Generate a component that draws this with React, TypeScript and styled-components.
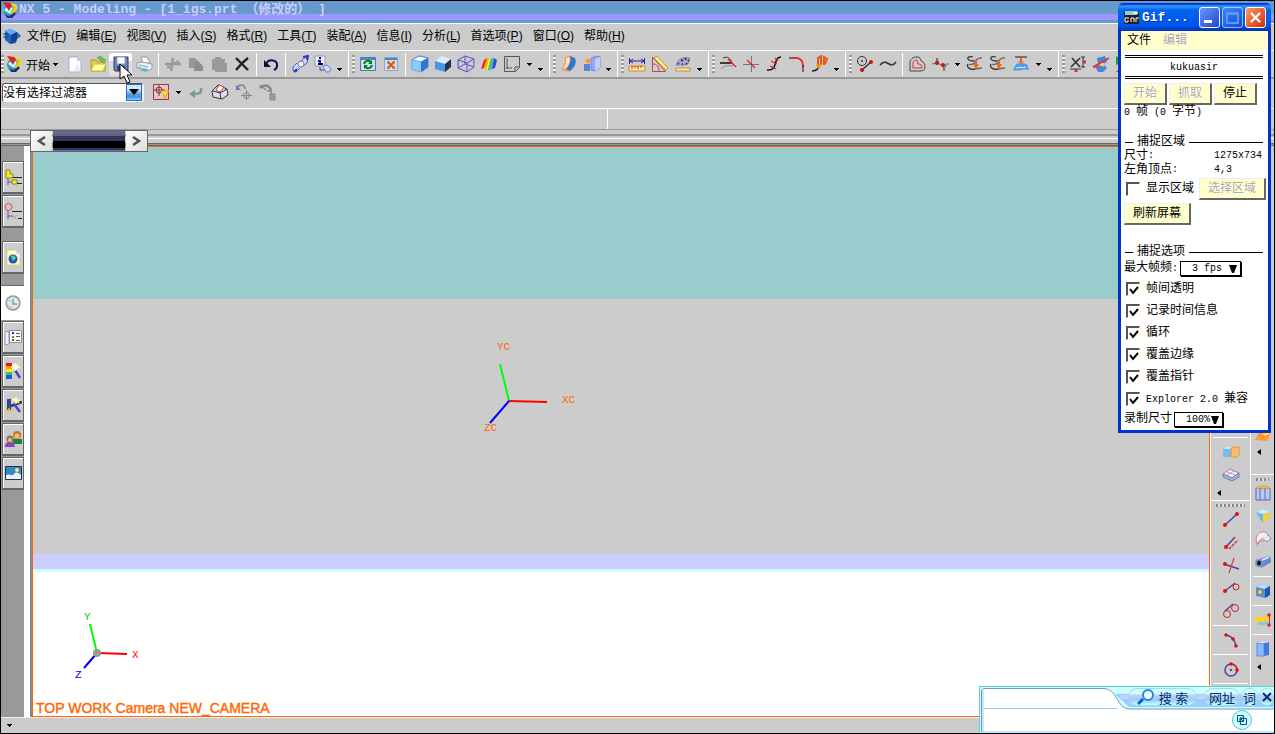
import React from "react";
import styled, { createGlobalStyle, css } from "styled-components";

const ui = `"Liberation Sans", "Noto Sans CJK SC", sans-serif`;
const mono = `"Liberation Mono", "Noto Sans CJK SC", monospace`;

const Global = createGlobalStyle`
  *, *::before, *::after { box-sizing: border-box; }
  body { margin: 0; background: #ccc; font-family: ${ui}; font-size: 12px; color: #000; }
  button, input, select { font: inherit; color: inherit; margin: 0; padding: 0; border: 0; border-radius: 0; background: none; }
  svg { display: block; flex: none; }
`;

/* ---------- icons ---------- */

const arrowsPair = (
  <>
    <path d="M7 2c-3-1-6 0-5 2s4 2 6 2M2 9c-2 4 3 6 7 5" stroke="#333" strokeWidth="1.300" />
    <path d="M8 6c3 0 3-4 8-3M3 9c3 2 4-1 6-1M8 14c3 0 5-1 8-1" stroke="#666" strokeWidth="1.300" />
    <path d="M10 5v6" stroke="#e62" strokeWidth="2" />
    <path d="M7 9h6l-3 5z" fill="#f60" />
  </>
);

const glyphs: Record<string, React.ReactNode> = {
  nx: (
    <>
      <ellipse cx="9" cy="8" rx="8" ry="5" fill="#fc3" transform="rotate(-25 9 8)" />
      <circle cx="8" cy="10" r="6" fill="#39c" />
      <path d="M3 9c2-3 6-4 9-2l-3 6z" fill="#cff" />
      <path d="M2 1l7 1 2 2-3 6z" fill="#d22" />
      <path d="M4 13c3 3 7 2 9-2l2 2-4 4H6z" fill="#236" />
      <path d="M13 3c4 2 3 7-2 10l-2-1c4-3 5-6 2-8z" fill="#fc0" />
    </>
  ),
  app: (
    <>
      <path d="M2 4l5-2 7 3 4 4-4 3-1 4-6 1-5-4z" fill="#26b" />
      <path d="M2 4l5-2 7 3-6 3z" fill="#6af" />
      <path d="M8 8l6-3v8l-6 4z" fill="#148" />
      <path d="M0 7h5M0 10h5" stroke="#048" />
    </>
  ),
  blank: (
    <>
      <path d="M3 2h8l4 4v11H3z" fill="#fff" stroke="#aac" />
      <path d="M11 2l4 4h-4z" fill="#bcf" />
      <path d="M12 8l2 8H8z" fill="#def" />
    </>
  ),
  open: (
    <>
      <path d="M2 5h5l2 2h7v9H2z" fill="#dc5" stroke="#a92" />
      <path d="M5 9h12l-3 7H2z" fill="#ff9" stroke="#cb4" />
      <path d="M8 3c3-3 6-1 7 2l2-1-2 4-4-2" fill="#7b6" stroke="#7a5" />
    </>
  ),
  save: (
    <>
      <path d="M2 2h14v14H3l-1-1z" fill="#68b" stroke="#336" />
      <path d="M5 2h8v7H5z" fill="#fff" stroke="#99b" />
      <path d="M5 11h8v5H5z" fill="#446" />
      <path d="M10 12h2v3h-2z" fill="#fff" />
    </>
  ),
  print: (
    <>
      <path d="M6 2h6l3 6H8z" fill="#fff" stroke="#99a" />
      <path d="M2 8l5-1 10 2v5l-5 2L2 13z" fill="#eef" stroke="#99a" />
      <path d="M4 10l9 2M3 12l4 1" stroke="#8aa" />
      <path d="M8 13l5 1-2 3-6-2z" fill="#5bb" />
    </>
  ),
  cut: <path d="M1 9h16M9 3l-2 13M9 9l6-3M6 12H3" stroke="#999" strokeWidth="2.500" />,
  copy: (
    <>
      <path d="M2 3h6l4 4v6H2z" fill="#999" />
      <path d="M7 7h5l4 4v5H7z" fill="#8f8f8f" />
    </>
  ),
  paste: <path d="M2 4h3V2h6v2h4v4h2v9H5v-2H2z" fill="#999" />,
  remove: <path d="M3 3l12 12M15 3C11 6 7 10 3 15" stroke="#222" strokeWidth="2.4" />,
  undo: (
    <>
      <path d="M4 9c3-6 12-4 11 2 0 2-1 3-3 4" stroke="#114" strokeWidth="2" />
      <path d="M2 5v7h7z" fill="#114" />
    </>
  ),
  finder: (
    <>
      <path d="M10 6l5-4 2 1-1 5-4 3M6 8l-4 4v3l3 2 4-4" fill="#cdf" stroke="#55b" />
      <circle cx="10" cy="9" r="3" fill="#eef" stroke="#77a" />
      <path d="M12 2l5-1-1 4M3 17l3-3" stroke="#33c" strokeWidth="2" />
    </>
  ),
  info: (
    <>
      <path d="M1 1h10v10H1z" fill="#eef" stroke="#99a" />
      <path d="M6 2v2M4 6h2v3M4 9h5" stroke="#008" strokeWidth="2" />
      <path d="M9 11l4-1 4 4-2 3h-3z" fill="#cdf" stroke="#77b" />
      <path d="M6 12v3h4" stroke="#448" />
    </>
  ),
  refresh: (
    <>
      <path d="M1.500 2.500h15v13h-15z" fill="#cdf" stroke="#57a" />
      <path d="M2 3h14v2H2z" fill="#48c" />
      <path d="M5 9c1-4 6-4 7-1M13 10c-1 4-6 4-7 1" stroke="#080" strokeWidth="2" />
      <path d="M13 5v4H9zM5 14v-4h4z" fill="#080" />
    </>
  ),
  fit: (
    <>
      <path d="M2.500 2.500h13v13h-13z" fill="#cdf" stroke="#8ad" />
      <path d="M3 3h12v2H3z" fill="#48c" />
      <path d="M6 7l6 6M12 7l-6 6" stroke="#d50" strokeWidth="2" />
      <path d="M5 6h3L5 9zM13 6v3l-3-3zM5 14v-3l3 3zM13 14h-3l3-3z" fill="#e70" />
    </>
  ),
  shadedEdge: (
    <>
      <path d="M1 5l7-4 9 2v9l-7 5-9-3z" fill="#59e" stroke="#48c" />
      <path d="M1 5l7-4 9 2-7 4z" fill="#eff" stroke="#68b" />
      <path d="M10 7l7-4v9l-7 5z" fill="#37c" />
      <path d="M1 5l9 2v10l-9-3z" fill="#8cf" />
    </>
  ),
  shaded: (
    <>
      <path d="M1 6l7-5 9 3-6 5z" fill="#def" />
      <path d="M1 6l10 3v8L1 14z" fill="#49e" />
      <path d="M11 9l6-5v8l-6 5z" fill="#235" />
    </>
  ),
  wire: <path d="M1 5l7-4 9 3v8l-7 5-9-4zM1 5l9 3 7-4M10 8v9M8 1v8M1 13l7-4 9 3" stroke="#55c" />,
  rainbow: (
    <>
      <path d="M1 14L4 5l3-2-3 10z" fill="#e22" />
      <path d="M4 13L7 3l2 1-3 10z" fill="#fa0" />
      <path d="M6 14L9 4h2L8 15z" fill="#ee2" />
      <path d="M8 15l3-11 2-1-3 12z" fill="#2c4" />
      <path d="M10 15l3-12h1l-2 11z" fill="#2bf" />
      <path d="M12 14l2-11 3 2-2 8z" fill="#44d" />
    </>
  ),
  sheet: <path d="M1.500 1.500h15v11l-4 4h-11zM16 12h-4v4M4 3v11M3 13h6" stroke="#555" />,
  flange: (
    <>
      <path d="M2 14c3-3 4-7 3-11l5-2c1 5 0 9-4 13z" fill="#fdb" stroke="#e84" />
      <path d="M10 1l5 2c2 5 0 9-5 13l-4-2c4-4 5-8 4-13z" fill="#37c" />
      <path d="M1 14l6 1 4 2-6-1z" fill="#f90" />
    </>
  ),
  move: (
    <>
      <path d="M8 3l6-2 3 1v11l-5 3-4-1z" fill="#8af" stroke="#78d" />
      <path d="M12 4l5-2v11l-5 3z" fill="#cce" />
      <circle cx="5" cy="6" r="2.500" fill="#f93" />
      <path d="M1 9h6v7H1z" fill="#58d" />
    </>
  ),
  ruler: (
    <>
      <path d="M1.500 3v6M16.500 3v6M2 6h14M5 4L2 6l3 2M13 4l3 2-3 2" stroke="#22a" />
      <path d="M1 11h16v5H1z" fill="#fe8" stroke="#c84" />
      <path d="M4 11v3M7 11v2M10 11v3M13 11v2" stroke="#c22" />
    </>
  ),
  angle: (
    <>
      <path d="M1.500 2v14.500h13zM2 9c4 0 6 3 6 7" stroke="#c44" />
      <path d="M3 3l3-2 11 12-2 2z" fill="#fe8" stroke="#b94" />
    </>
  ),
  measure: (
    <>
      <path d="M2 10C4 4 8 2 16 3l-2 6-4 1z" fill="#8bf" stroke="#68c" />
      <path d="M4 8l1 1M7 5l2 1M11 3l1 2M14 5l1 1M12 8l1 1M8 9h1" stroke="#c00" strokeWidth="2" />
      <path d="M2 13h14v3H2z" fill="#fe9" stroke="#c84" />
    </>
  ),
  trim: (
    <>
      <path d="M1 8h12" stroke="#111" strokeWidth="1.500" />
      <path d="M4 3c5-2 7 0 9 5" stroke="#333" />
      <path d="M2 14c3-3 7-4 12-3" stroke="#888" />
      <path d="M9 4l8 8" stroke="#e22" strokeWidth="1.500" />
    </>
  ),
  divide: (
    <>
      <path d="M9.500 1v16M1 9.500h16" stroke="#777" />
      <path d="M5 5l8 8" stroke="#e22" strokeWidth="1.500" />
    </>
  ),
  stretch: (
    <>
      <path d="M2 15c12 1 5-12 14-13" stroke="#111" strokeWidth="1.600" />
      <path d="M6 6l6 3M5 11l6 3M10 3l3 3" stroke="#d22" strokeWidth="1.200" />
    </>
  ),
  fillet: (
    <>
      <path d="M1 3h6" stroke="#111" />
      <path d="M5 3c8-1 10 3 10 9" stroke="#e22" strokeWidth="1.600" />
      <path d="M15 10v7" stroke="#111" />
    </>
  ),
  curveUp: (
    <>
      <path d="M1 16c5 0 7-2 7-7" stroke="#222" strokeWidth="1.500" />
      <path d="M7 11V3l3-2v9M13 10V2l3 2-2 5" stroke="#e51" strokeWidth="2" />
      <path d="M5 9h6l-3 5z" fill="#f80" />
    </>
  ),
  circlePoint: (
    <>
      <circle cx="6" cy="6" r="4.500" stroke="#333" />
      <path d="M6 15l9-8" stroke="#333" strokeWidth="1.500" />
      <circle cx="6" cy="15" r="2" fill="#c11" />
      <circle cx="15" cy="7" r="2" fill="#c11" />
      <circle cx="6" cy="6" r="1" fill="#333" />
    </>
  ),
  spline: <path d="M1 10c4-5 7-2 9-1s4 2 7-2" stroke="#333" strokeWidth="1.500" />,
  offset: (
    <>
      <path d="M2 16V8c0-4 3-6 7-6 3 0 4 2 4 4 3 1 4 3 4 6s-2 4-5 4z" stroke="#444" />
      <path d="M5 13V8c0-2 2-3 4-3l1 4c3 0 4 1 4 4z" stroke="#d33" />
    </>
  ),
  points: (
    <>
      <path d="M1 9l4-1 1-5 2 6 4 2 1 5 2-7h3" stroke="#666" />
      <circle cx="6" cy="8" r="2" fill="#c11" />
      <circle cx="12" cy="10" r="2" fill="#c11" />
    </>
  ),
  bridge: arrowsPair,
  join: arrowsPair,
  project: (
    <>
      <path d="M3 2h12" stroke="#555" strokeWidth="1.500" />
      <path d="M9 3v4" stroke="#e62" strokeWidth="2" />
      <path d="M6 6h6l-3 4z" fill="#f70" />
      <path d="M1 15l3-6c3-1 8-1 11 0l2 6c-4-2-11 2-16 0z" fill="#59e" />
      <path d="M4 13c3-2 7 1 10-1" stroke="#cff" />
    </>
  ),
  constraint: (
    <>
      <path d="M3 3l8 9M11 3l-9 9" stroke="#333" strokeWidth="1.600" />
      <path d="M14 2v10M12 2h4M12 12h4M1 14h11M7 14v3" stroke="#333" />
      <path d="M14 7h3M7 15v2" stroke="#c33" strokeWidth="3" />
    </>
  ),
  deform: (
    <>
      <path d="M5 3l8-2 2 5-3 4 3 3-4 4H6l-2-4 2-4z" fill="#48d" />
      <path d="M5 8h8l-2 4z" fill="#fc6" />
      <path d="M1 12L17 3M1 12h5" stroke="#d33" strokeWidth="1.500" />
    </>
  ),
  flag: (
    <>
      <path d="M1 1l8 5-8 4z" fill="#0a3" />
      <path d="M1 17l8-7v7z" fill="#c22" />
    </>
  ),
  snap: (
    <>
      <path d="M1.500 1.500h15v15h-15z" fill="#ecc" fillOpacity=".4" stroke="#c24" />
      <path d="M7 2v11M2 7h11" stroke="#833" />
      <circle cx="7" cy="7" r="3" stroke="#833" />
      <path d="M8 8h9l-3 4v4l-2-1v-3z" fill="#fd3" stroke="#ca2" />
    </>
  ),
  back: (
    <>
      <path d="M14 5v3c0 3-5 3-9 3" stroke="#799" strokeWidth="2.500" />
      <path d="M2 11l6-4v8z" fill="#799" />
    </>
  ),
  cube: (
    <>
      <path d="M1 8l6-6 9 4 1 6-6 4-9-2z" fill="#dde" stroke="#334" />
      <path d="M2 8l7 2 1 6M9 10l7-4" stroke="#334" />
      <path d="M8 2l5 2-4 5-4-2z" fill="#fff" stroke="#c33" />
    </>
  ),
  undoPoint: (
    <>
      <path d="M2 5c3-5 8-3 8 1" stroke="#77a" strokeWidth="1.500" />
      <path d="M1 2v5h5z" fill="#77a" />
      <path d="M11.500 7v10M6 12.500h11" stroke="#888" />
      <circle cx="11.500" cy="12.500" r="3" stroke="#888" />
    </>
  ),
  undoFace: (
    <>
      <path d="M1 5c4-4 10-3 11 3" stroke="#888" strokeWidth="2.500" />
      <path d="M1 2l6 5M8 8h4v6" stroke="#888" strokeWidth="1.500" />
      <path d="M11 11h5v6h-5z" fill="#999" stroke="#888" />
    </>
  ),
  tree: (
    <>
      <path d="M4 9v8M4 14h5" stroke="#55a" />
      <path d="M2 2h4v4h3v4H2z" fill="#ee2" stroke="#882" />
      <path d="M8 12h5v4H8z" fill="#ee2" stroke="#882" />
      <path d="M9 9.500h9M13 15.500h5" stroke="#222" />
    </>
  ),
  treeRed: (
    <>
      <path d="M4 8v9M4 14h5" stroke="#55a" />
      <path d="M8 9.500h10M14 16.500h4" stroke="#222" />
      <circle cx="4.500" cy="5" r="3.500" fill="#ebb" stroke="#a66" />
      <path d="M8 13l5 4M13 13l-5 4" stroke="#c88" strokeDasharray="2 1" />
    </>
  ),
  web: (
    <>
      <path d="M3 2h9l4 4v11H3z" fill="#ffb" stroke="#dc8" />
      <path d="M12 2l4 4h-4z" fill="#cdf" />
      <circle cx="9" cy="11" r="4.500" fill="#25c" />
      <path d="M7 8c2-1 4 0 5 2l-3 3z" fill="#4d8" />
    </>
  ),
  clock: (
    <>
      <circle cx="9" cy="9" r="7" fill="#cdd" stroke="#999" strokeWidth="1.500" />
      <circle cx="9" cy="9" r="5" fill="#dee" />
      <path d="M9 5v5h4" stroke="#89a" strokeWidth="1.500" />
      <path d="M5 11l3 3M5 6l2 2" stroke="#c9e" />
    </>
  ),
  palette: (
    <>
      <path d="M1 4l4-1v13l-4 1z" fill="#eef" stroke="#99a" />
      <path d="M5.500 2.500h12v12h-12z" fill="#fff" stroke="#88a" />
      <path d="M8 5h2" stroke="#22c" strokeWidth="2" />
      <path d="M8 9h2" stroke="#2a2" strokeWidth="2" />
      <path d="M8 12h2" stroke="#c22" strokeWidth="2" />
      <path d="M12 5.500h4M12 8.500h4M12 12.500h4" stroke="#555" />
    </>
  ),
  wand: (
    <>
      <path d="M2 1h6v4H2z" fill="#e11" />
      <path d="M2 4h6v3H2z" fill="#f90" />
      <path d="M2 7h6v3H2z" fill="#fe0" />
      <path d="M2 10h6v3H2z" fill="#2c6" />
      <path d="M2 13h6v4H2z" fill="#25e" />
      <path d="M11 8l5 8" stroke="#44c" strokeWidth="2.500" />
      <path d="M7 5h9M11 1v8M8 2l6 6M14 2L8 8" stroke="#ffc" strokeWidth="1.500" />
    </>
  ),
  wandDark: (
    <>
      <path d="M3 3h4v11H3z" fill="#349" />
      <path d="M7 10l11-4" stroke="#333" strokeWidth="2.500" />
      <path d="M10 8l6 8" stroke="#44c" strokeWidth="2.500" />
      <path d="M8 4h8M12 1v7M9 2l6 5" stroke="#ffa" strokeWidth="1.500" />
      <path d="M1 15h8M5 12v5" stroke="#fb4" strokeWidth="1.500" />
    </>
  ),
  people: (
    <>
      <path d="M9 9h9v5H9z" fill="#184" />
      <circle cx="13" cy="5" r="4" fill="#c72" />
      <circle cx="13" cy="6" r="2.500" fill="#fb7" />
      <path d="M1 17c0-7 9-7 10 0z" fill="#84b" />
      <circle cx="6" cy="9" r="3.500" fill="#875" />
      <circle cx="6" cy="10" r="2" fill="#eb9" />
    </>
  ),
  photo: (
    <>
      <path d="M1.500 2.500h16v13h-16z" fill="#38c" stroke="#234" />
      <circle cx="13" cy="6" r="2" fill="#fe5" />
      <path d="M2 11c4-2 6 2 8-1s5-1 7 1v4H2z" fill="#eef" />
    </>
  ),
  block: (
    <>
      <path d="M1 6l3-2h6v9l-2 1H1z" fill="#7be" />
      <path d="M9 6l2-2h6v8l-2 2H9z" fill="#fb6" stroke="#c95" />
      <path d="M1 6l3-2h6L8 6z" fill="#bef" />
    </>
  ),
  slab: (
    <>
      <path d="M1 8l7-5 9 4-7 5z" fill="#eef" stroke="#88b" />
      <path d="M1 8l9 4 7-5v4l-7 4-9-4z" fill="#9bd" stroke="#77a" />
      <path d="M5 6l8 3M5 9l7-4" stroke="#d99" />
    </>
  ),
  line: (
    <>
      <path d="M3 15L15 4" stroke="#549" strokeWidth="1.500" />
      <circle cx="3" cy="15" r="2" fill="#d11" />
      <circle cx="15" cy="4" r="2" fill="#d11" />
    </>
  ),
  parallel: (
    <>
      <path d="M4 14L13 4" stroke="#549" strokeWidth="1.500" />
      <path d="M7 16l9-9" stroke="#c33" strokeWidth="1.500" strokeDasharray="3 1" />
      <circle cx="4" cy="14" r="2" fill="#d11" />
    </>
  ),
  crossing: (
    <>
      <path d="M2 8l15 5" stroke="#549" strokeWidth="1.500" />
      <path d="M7 17l5-15" stroke="#c44" strokeWidth="1.200" />
      <circle cx="3" cy="8" r="2" fill="#d11" />
    </>
  ),
  tangent: (
    <>
      <path d="M3 12l10-8" stroke="#549" strokeWidth="1.500" />
      <circle cx="14" cy="8" r="3" stroke="#c22" />
      <circle cx="3" cy="12" r="2" fill="#d11" />
    </>
  ),
  tangentTwo: (
    <>
      <path d="M3 9l8-7" stroke="#549" strokeWidth="1.500" />
      <circle cx="13" cy="6" r="3.500" stroke="#c22" />
      <circle cx="5" cy="12" r="3.500" stroke="#c22" />
    </>
  ),
  arc: (
    <>
      <path d="M4 4c6 1 9 5 10 11" stroke="#549" strokeWidth="1.500" />
      <circle cx="4" cy="4" r="1.800" fill="#d11" />
      <circle cx="11" cy="8" r="1.800" fill="#d11" />
      <circle cx="14" cy="15" r="1.800" fill="#d11" />
    </>
  ),
  circle: (
    <>
      <circle cx="9" cy="10" r="6" stroke="#549" strokeWidth="1.500" />
      <circle cx="9" cy="10" r="1.200" fill="#549" />
      <path d="M9 4c4 0 6 3 6 6" stroke="#d22" strokeWidth="1.500" />
      <circle cx="9" cy="4" r="1.800" fill="#d11" />
      <circle cx="15" cy="10" r="1.800" fill="#d11" />
    </>
  ),
  sweep: (
    <>
      <path d="M1 15l5-9 7-2 4 4-4 8z" fill="#f93" />
      <path d="M6 6l7-2 4 4-6 3z" fill="#fd6" />
    </>
  ),
  cage: (
    <>
      <path d="M2 4h14v12H2zM6 4v12M11 4v12" fill="#bce" stroke="#56b" />
      <path d="M2 4l3-2h9l2 2H2z" fill="#fc4" stroke="#ca4" />
    </>
  ),
  loft: (
    <>
      <path d="M2 5l7-3 7 3-2 6-5 5-3-4z" fill="#6be" />
      <path d="M9 7l7-2-1 6-6 5z" fill="#fc3" />
      <path d="M2 5l7-3 7 3-7 2z" fill="#cef" />
    </>
  ),
  surface: (
    <>
      <path d="M2 9c2-8 8-9 12-5l-2 5c-4-2-6 1-9 5z" fill="#eef" stroke="#d77" />
      <path d="M3 16c2-5 7-7 11-4l3-4-3-3" fill="#dee" stroke="#88b" />
    </>
  ),
  tube: (
    <>
      <path d="M5 6l9-3c3 0 4 5 2 7l-9 5z" fill="#68c" />
      <path d="M8 7l7-3" stroke="#cdf" strokeWidth="2" />
      <ellipse cx="5" cy="10" rx="4" ry="4" fill="#79c" />
      <ellipse cx="5" cy="10" rx="2" ry="2.500" fill="#112" />
    </>
  ),
  hole: (
    <>
      <path d="M2 5l6-3 8 2v9l-5 3-9-2z" fill="#49e" />
      <path d="M2 5l6-3 8 2-5 3z" fill="#bdf" />
      <path d="M11 7l5-3v9l-5 3z" fill="#25a" />
      <circle cx="6" cy="10" r="2.500" fill="#fc6" stroke="#a62" />
    </>
  ),
  sheetArrow: (
    <>
      <path d="M1 7c4-3 8 0 14-3v6c-6 3-8 0-13 3z" fill="#fc3" />
      <path d="M3 12c4-2 6 1 11-2v3c-5 2-7 0-10 1z" fill="#6cf" />
      <path d="M15.500 3v12" stroke="#c33" />
      <circle cx="15" cy="4" r="1.800" fill="#d22" />
      <circle cx="15" cy="14" r="1.800" fill="#d22" />
    </>
  ),
  extrude: (
    <>
      <path d="M3 3h7v13H3z" fill="#8bf" stroke="#68c" />
      <path d="M10 3l5-1v13l-5 1z" fill="#47d" />
      <path d="M3 3l4-1h8l-5 1z" fill="#def" />
    </>
  ),
};

const Glyph = ({ name }: { name: string }) => (
  <svg width="18" height="18" viewBox="0 0 18 18" fill="none" aria-hidden="true">
    {glyphs[name]}
  </svg>
);

const Caret = () => (
  <svg width="5" height="3" viewBox="0 0 5 3" shapeRendering="crispEdges" aria-hidden="true">
    <path d="M0 0h5L2.500 3z" />
  </svg>
);

/* ---------- frame and bars ---------- */

const Frame = styled.div`
  position: relative;
  display: flex;
  flex-direction: column;
  min-height: 100vh;
  border: 1px solid #000;
  background: #ccc;
  overflow: hidden;
`;

const TitleBar = styled.header`
  display: flex;
  align-items: center;
  height: 23px;
  border-bottom: 1px solid #fff;
  background: linear-gradient(#69c 13px, #99f 13px, #99f 19px, #69c 19px);
  padding-bottom: 4px;
`;

const AppTitle = styled.h1`
  margin: 0;
  font: bold 13px/16px ${mono};
  color: #ccf;
  white-space: pre;
`;

const MenuBar = styled.nav`
  display: flex;
  align-items: center;
  height: 27px;
  padding: 0 0 2px 2px;
  border-bottom: 1px solid #fff;
`;

const Menu = styled.button`
  margin-left: 10px;
  line-height: 18px;
  white-space: nowrap;
  &:first-of-type { margin-left: 6px; }
`;

const ToolRow = styled.div`
  display: flex;
  height: 28px;
  border-bottom: 2px solid #999;
  overflow: hidden;
`;

const ToolGroup = styled.div`
  display: flex;
  flex: none;
  align-items: center;
  padding-left: 3px;
  border-left: 1px solid #fff;
  &:first-child { padding-left: 0; border-left: 0; }
`;

const Grip = styled.span<{ $flat?: boolean }>`
  flex: none;
  ${(p) =>
    p.$flat
      ? css`
          height: 3px;
          margin: 3px 5px 0;
          background: repeating-linear-gradient(90deg, #888 0 2px, #ddd 2px 4px);
        `
      : css`
          width: 3px;
          height: 18px;
          margin-right: 1px;
          background: repeating-linear-gradient(#999 0 2px, #eee 2px 4px);
        `}
`;

const Tool = styled.button<{ $hot?: boolean }>`
  display: flex;
  flex: none;
  align-items: center;
  justify-content: center;
  width: 23px;
  height: 23px;
  border-radius: 3px;
  background: ${(p) => (p.$hot ? "linear-gradient(#fff 8px, #ddd 8px)" : "none")};
`;

const Start = styled.button`
  display: flex;
  align-items: center;
  width: 58px;
  gap: 3px;
  white-space: nowrap;
`;

const Divider = styled.span`
  flex: none;
  width: 1px;
  height: 23px;
  margin: 0 2px 0 3px;
  background: #fff;
`;

const Drop = styled.button`
  display: flex;
  flex: none;
  align-items: center;
  justify-content: center;
  width: 12px;
  height: 22px;
`;

const More = styled(Drop)`
  width: 14px;
  padding: 10px 3px 0 0;
`;

const SelectionRow = styled.div`
  display: flex;
  align-items: center;
  height: 30px;
  padding: 0 0 3px 1px;
  border-bottom: 1px solid #fff;
`;

const Filter = styled.label`
  position: relative;
  display: flex;
  width: 142px;
  height: 19px;
  margin-right: 5px;
  border: 1px solid #555;
  border-right: 2px solid #eef;
  border-bottom: 1px solid #fff;
  border-radius: 3px;
  background: #fff;
`;

const FilterSelect = styled.select`
  appearance: none;
  width: 100%;
  padding-top: 1px;
  line-height: 16px;
`;

const FilterArrow = styled.span`
  position: absolute;
  right: 0;
  top: 0;
  display: flex;
  align-items: center;
  justify-content: center;
  width: 16px;
  height: 17px;
  background: linear-gradient(#cef 4px, #69c 9px, #39e 12px, #9cf);
  border: 1px solid #36c;
  pointer-events: none;
`;

const WideTool = styled(Tool)`
  width: 24px;
`;

const PromptRow = styled.div`
  display: grid;
  grid-template-columns: 10fr 11fr;
  height: 21px;
  border-bottom: 1px solid #999;
`;

const Prompt = styled.div`
  & + & { border-left: 1px solid #fff; }
`;

const Seam = styled.div`
  position: relative;
  height: 16px;
  background: linear-gradient(
    #ccc 4px, #999 4px, #999 6px, #ccc 6px, #ccc 8px, #fff 8px, #fff 9px,
    #ccc 9px, #ccc 13px, #666 13px, #666 14px, #999 14px, #999 15px, #666 15px
  );
`;

const Scroller = styled.div`
  position: absolute;
  z-index: 2;
  left: 29px;
  top: 0;
  display: flex;
  width: 118px;
  height: 22px;
  border: 1px solid #666;
`;

const ScrollButton = styled.button`
  display: flex;
  align-items: center;
  justify-content: center;
  width: 21px;
  background: linear-gradient(135deg, #fff, #ddd);
`;

const Thumb = styled.span`
  flex: 1;
  margin: 0 1px;
  background: linear-gradient(#669 3px, #666 3px, #666 5px, #336 5px, #336 10px, #000 10px, #000 17px, #336 17px, #336 19px, #669 19px);
`;

/* ---------- work area ---------- */

const Work = styled.div`
  display: flex;
  flex: 1;
`;

const Rail = styled.div`
  display: flex;
  flex-direction: column;
  width: 23px;
  padding-top: 15px;
  background: #999;
`;

const RailTab = styled.button<{ $open?: boolean }>`
  display: flex;
  align-items: center;
  justify-content: center;
  height: 33px;
  margin: 0 0 1px 1px;
  border: solid #666;
  border-width: 1px 1px 2px;
  background: #ccc;
  box-shadow: inset 1px 1px #fff;
  ${(p) =>
    p.$open &&
    css`
      height: 35px;
      margin: 10px 0 1px 0;
      border: 0;
      border-top: 1px solid #666;
      background: #fff;
    `}
`;

const RailSpace = styled.span`
  height: 12px;
`;

const Gutter = styled.div`
  width: 8px;
  border-right: 2px solid #888;
  background: #fff;
`;

const Viewport = styled.main`
  position: relative;
  display: flex;
  flex: 1;
  flex-direction: column;
  min-width: 0;
  border: 1px solid #f60;
`;

const Band = styled.div<{ $share: number; $fill: string }>`
  flex: ${(p) => p.$share} 0 0;
  background: ${(p) => p.$fill};
`;

const Caption = styled.p`
  position: absolute;
  left: 3px;
  bottom: 0;
  margin: 0;
  font-size: 14px;
  line-height: 16px;
  color: #f60;
  -webkit-text-stroke: 0.4px #f60;
  white-space: nowrap;
`;

const Triad = styled.svg<{ $left: string; $top: string }>`
  position: absolute;
  left: ${(p) => p.$left};
  top: ${(p) => p.$top};
  font: 11px "Liberation Mono", monospace;
`;

const Dock = styled.div<{ $wide?: boolean }>`
  display: flex;
  flex: none;
  flex-direction: column;
  width: ${(p) => (p.$wide ? 40 : 24)}px;
  padding-top: ${(p) => (p.$wide ? 288 : 276)}px;
  border-left: 1px solid #fff;
`;

const DockTool = styled(Tool)`
  align-self: center;
`;

const DockLine = styled.span`
  height: 1px;
  margin: 3px 2px 2px;
  background: #fff;
`;

const DockMore = styled.button<{ $gap?: boolean }>`
  height: 14px;
  padding-left: 6px;
  margin-bottom: ${(p) => (p.$gap ? 15 : 0)}px;
`;

const DockEdge = styled.span`
  height: 1px;
  background: #fff;
`;

const StatusBar = styled.footer`
  display: flex;
  align-items: center;
  height: 16px;
  border-top: 1px solid #eee;
  padding-left: 2px;
`;

/* ---------- capture window ---------- */

const Capture = styled.section`
  position: absolute;
  z-index: 5;
  top: 2px;
  right: 3px;
  width: 153px;
  border: 3px solid #03c;
  border-top: 0;
  border-radius: 6px 6px 0 0;
  background: #fff;
  font: 10px/14px ${mono};
`;

const CaptureTitle = styled.header`
  display: flex;
  align-items: center;
  gap: 2px;
  height: 28px;
  margin: 0 -3px;
  padding: 1px 5px 0;
  border-radius: 5px 5px 0 0;
  background: linear-gradient(#03c 1px, #39f 3px, #06e 7px, #05e 22px, #03b);
  color: #fff;
`;

const CaptureName = styled.h2`
  flex: 1;
  margin: 0;
  font: bold 13px/18px ${mono};
  text-shadow: 1px 1px #039;
`;

const CaptionButton = styled.button<{ $tone?: string }>`
  display: flex;
  align-items: center;
  justify-content: center;
  width: 21px;
  height: 21px;
  border: 1px solid #fff;
  border-radius: 3px;
  background: ${(p) => p.$tone || "linear-gradient(135deg, #69f, #24c)"};
  opacity: ${(p) => (p.disabled ? 0.6 : 1)};
`;

const CaptureMenu = styled.nav`
  display: flex;
  gap: 12px;
  height: 19px;
  padding: 1px 0 0 6px;
  background: #ffc;
  font-size: 12px;
`;

const CaptureMenuItem = styled.button`
  &:disabled { color: #aaa; text-shadow: 1px 1px #fff; }
`;

const CaptureBody = styled.div`
  padding: 5px 3px 3px;
`;

const Owner = styled.p`
  height: 24px;
  margin: 0 2px 4px 1px;
  border: double #000;
  border-width: 3px 0;
  line-height: 19px;
  text-align: center;
`;

const Row = styled.div<{ $h: number; $above?: number; $gap?: number }>`
  display: flex;
  align-items: center;
  gap: ${(p) => p.$gap || 0}px;
  height: ${(p) => p.$h}px;
  margin-top: ${(p) => p.$above || 0}px;
  line-height: 16px;
  white-space: nowrap;
`;

const Cn = styled.span`
  font-size: 12px;
`;

const Push = styled.button<{ $wide?: boolean }>`
  width: ${(p) => (p.$wide ? 67 : 43)}px;
  height: 22px;
  flex: none;
  border: solid;
  border-width: 1px 2px 2px 1px;
  border-color: #eee #666 #666 #eee;
  background: #ffc;
  font-size: 12px;
  line-height: 18px;
  &:disabled { color: #aaa; text-shadow: 1px 1px #fff; }
`;

const Legend = styled.h3`
  display: flex;
  align-items: center;
  gap: 4px;
  height: 14px;
  margin: 0 2px 0 1px;
  font-size: 12px;
  font-weight: normal;
  white-space: nowrap;
  &::before { content: ""; width: 8px; height: 1px; background: #000; }
  &::after { content: ""; flex: 1; height: 1px; background: #000; }
`;

const Value = styled.span`
  margin-left: auto;
  width: 51px;
`;

const Check = styled.label`
  display: flex;
  align-items: center;
  gap: 6px;
  height: 22px;
  padding-left: 2px;
  white-space: nowrap;
`;

const Tick = styled.input`
  appearance: none;
  width: 14px;
  height: 14px;
  border: solid;
  border-width: 2px 1px 1px 2px;
  border-color: #555 #ffc #ffc #555;
  background: #fff;
  &:checked {
    background: no-repeat center / 10px 10px
      url("data:image/svg+xml,%3Csvg xmlns='http://www.w3.org/2000/svg' viewBox='0 0 10 10'%3E%3Cpath d='M1 4l3 4 5-6' fill='none' stroke='%23000' stroke-width='2'/%3E%3C/svg%3E");
  }
`;

const Pick = styled.span<{ $w: number }>`
  position: relative;
  display: flex;
  width: ${(p) => p.$w}px;
  height: 15px;
  margin-left: 2px;
  border: 1px solid #000;
  box-shadow: 1px 1px #000;
`;

const PickSelect = styled.select`
  appearance: none;
  width: 100%;
  padding-left: 11px;
  line-height: 13px;
`;

const PickArrow = styled.svg`
  position: absolute;
  right: 3px;
  top: 3px;
  pointer-events: none;
`;

/* ---------- search strip ---------- */

const Strip = styled.aside`
  position: absolute;
  z-index: 6;
  right: -1px;
  bottom: 0;
  width: 296px;
  height: 47px;
  font-size: 13px;
  color: #036;
`;

const StripShape = styled.svg`
  position: absolute;
  inset: 0;
`;

const StripRow = styled.form`
  position: relative;
  display: flex;
  align-items: center;
  padding: 2px 0 0 8px;
`;

const StripInput = styled.input`
  flex: 1;
  min-width: 0;
  height: 17px;
  margin-right: 36px;
  outline: 0;
`;

const Pill = styled.button<{ $w: number }>`
  display: flex;
  flex: none;
  align-items: center;
  justify-content: center;
  gap: 4px;
  width: ${(p) => p.$w}px;
  height: 18px;
  border: 1px solid #9de;
  border-radius: 9px;
  background: linear-gradient(#cff 5px, #cce 6px, #9cf 11px, #cff);
  white-space: nowrap;
`;

const Spaced = styled(Pill)`
  margin-right: 7px;
`;

const Round = styled.button`
  position: absolute;
  right: 23px;
  bottom: 3px;
  display: flex;
  align-items: center;
  justify-content: center;
  width: 20px;
  height: 20px;
  border: 1px solid #6bc;
  border-radius: 10px;
  background: #cff;
`;

const Pointer = styled.svg`
  position: absolute;
  z-index: 3;
  left: 118px;
  top: 62px;
`;

/* ---------- data ---------- */

const menus: [string, string][] = [
  ["文件", "F"], ["编辑", "E"], ["视图", "V"], ["插入", "S"], ["格式", "R"], ["工具", "T"],
  ["装配", "A"], ["信息", "I"], ["分析", "L"], ["首选项", "P"], ["窗口", "O"], ["帮助", "H"],
];

/* "|" is a divider, "v" a drop-down arrow, "+" the overflow arrow */
const toolbars: string[][] = [
  ["start", "blank", "open", "save", "print", "|", "cut", "copy", "paste", "remove", "|", "undo", "|", "finder", "info", "+"],
  ["refresh", "fit", "|", "shadedEdge", "shaded", "wire", "rainbow", "sheet", "v", "+"],
  ["flange", "move", "+"],
  ["ruler", "angle", "measure", "+"],
  ["trim", "divide", "stretch", "fillet", "curveUp", "+"],
  ["circlePoint", "spline", "|", "offset", "points", "v", "bridge", "join", "project", "v", "+"],
  ["constraint", "deform", "flag"],
];

/* "-" is a rule, "=" a grip, "<" a fly-out arrow ("<<" ends its bar) */
const dockA = ["-", "block", "slab", "<", "=", "line", "parallel", "crossing", "tangent", "tangentTwo", "-", "arc", "-", "circle", "-"];
const dockB = ["sweep", "<<", "=", "cage", "loft", "surface", "tube", "-", "hole", "-", "sheetArrow", "-", "extrude", "<"];

const options = ["帧间透明", "记录时间信息", "循环", "覆盖边缘", "覆盖指针"];

const renderTool = (t: string, i: number) => {
  if (t === "|") return <Divider key={i} />;
  if (t === "v") return <Drop key={i} aria-label="drop-down"><Caret /></Drop>;
  if (t === "+") return <More key={i} aria-label="more"><Caret /></More>;
  if (t === "start") return <Start key={i}><Glyph name="nx" />开始<Caret /></Start>;
  return <Tool key={i} $hot={t === "save"} aria-label={t}><Glyph name={t} /></Tool>;
};

const renderDock = (t: string, i: number) => {
  if (t === "-") return <DockLine key={i} />;
  if (t === "=") return <React.Fragment key={i}><DockEdge /><Grip $flat /></React.Fragment>;
  if (t[0] === "<")
    return (
      <DockMore key={i} $gap={t === "<<"} aria-label="more">
        <svg width="4" height="6" viewBox="0 0 4 6"><path d="M4 0v6L0 3z" /></svg>
      </DockMore>
    );
  return <DockTool key={i} aria-label={t}><Glyph name={t} /></DockTool>;
};

export default function App() {
  return (
    <>
      <Global />
      <Frame>
        <TitleBar>
          <Glyph name="nx" />
          <AppTitle>NX 5 - Modeling - [1_igs.prt （修改的） ]</AppTitle>
        </TitleBar>
        <MenuBar>
          <Glyph name="app" />
          {menus.map(([label, key]) => (
            <Menu key={key}>{label}(<u>{key}</u>)</Menu>
          ))}
        </MenuBar>
        <ToolRow>
          {toolbars.map((group, g) => (
            <ToolGroup key={g}><Grip />{group.map(renderTool)}</ToolGroup>
          ))}
        </ToolRow>
        <SelectionRow>
          <Filter>
            <FilterSelect aria-label="选择过滤器"><option>没有选择过滤器</option></FilterSelect>
            <FilterArrow>
              <svg width="10" height="6" viewBox="0 0 10 6"><path d="M0 0h10L5 6z" /></svg>
            </FilterArrow>
          </Filter>
          <Tool aria-label="snap"><Glyph name="snap" /></Tool>
          <Drop aria-label="drop-down"><Caret /></Drop>
          {["back", "cube", "undoPoint", "undoFace"].map((n) => (
            <WideTool key={n} aria-label={n}><Glyph name={n} /></WideTool>
          ))}
        </SelectionRow>
        <PromptRow><Prompt /><Prompt /></PromptRow>
        <Seam>
          <Scroller>
            <ScrollButton aria-label="left">
              <svg width="9" height="10" viewBox="0 0 9 10" fill="none" stroke="#555" strokeWidth="2.500"><path d="M8 1L2 5l6 4" /></svg>
            </ScrollButton>
            <Thumb />
            <ScrollButton aria-label="right">
              <svg width="9" height="10" viewBox="0 0 9 10" fill="none" stroke="#555" strokeWidth="2.500"><path d="M1 1l6 4-6 4" /></svg>
            </ScrollButton>
          </Scroller>
        </Seam>
        <Work>
          <Rail>
            <RailTab aria-label="tree"><Glyph name="tree" /></RailTab>
            <RailTab aria-label="constraints"><Glyph name="treeRed" /></RailTab>
            <RailSpace />
            <RailTab aria-label="web"><Glyph name="web" /></RailTab>
            <RailTab $open aria-label="history"><Glyph name="clock" /></RailTab>
            {["palette", "wand", "wandDark", "people", "photo"].map((n) => (
              <RailTab key={n} aria-label={n}><Glyph name={n} /></RailTab>
            ))}
          </Rail>
          <Gutter />
          <Viewport>
            <Band $share={152} $fill="#9cc" />
            <Band $share={255} $fill="#ccc" />
            <Band $share={15} $fill="#ccf" />
            <Band $share={3} $fill="#cff" />
            <Band $share={144} $fill="#fff" />
            <Triad $left="38%" $top="33%" width="110" height="100" viewBox="0 -2 110 100" fill="none" strokeWidth="2">
              <path d="M29 64L20 27" stroke="#0f0" />
              <path d="M29 64l38 1" stroke="#f00" />
              <path d="M29 64L10 86" stroke="#00f" />
              <g fill="#f60" stroke="none">
                <text x="17" y="13">YC</text>
                <text x="82" y="66">XC</text>
                <text x="4" y="94">ZC</text>
              </g>
            </Triad>
            <Triad $left="37px" $top="81%" width="90" height="75" viewBox="0 -2 90 75" fill="none" strokeWidth="2">
              <path d="M27 43L20 14" stroke="#0f0" />
              <path d="M27 43l30 1" stroke="#f00" />
              <path d="M27 43L14 58" stroke="#00f" />
              <circle cx="27" cy="43" r="4" fill="#999" />
              <g stroke="none">
                <text x="14" y="10" fill="#0c0">Y</text>
                <text x="62" y="48" fill="#f00">X</text>
                <text x="5" y="68" fill="#00f">Z</text>
              </g>
            </Triad>
            <Caption>TOP WORK Camera NEW_CAMERA</Caption>
          </Viewport>
          <Dock $wide>{dockA.map(renderDock)}</Dock>
          <Dock>{dockB.map(renderDock)}</Dock>
        </Work>
        <StatusBar><Drop aria-label="status menu"><Caret /></Drop></StatusBar>

        <Pointer width="14" height="22" viewBox="0 0 14 22" fill="#fff" stroke="#000">
          <path d="M1 1v15l4-3 3 7 3-1-3-7h5z" />
        </Pointer>

        <Capture>
          <CaptureTitle>
            <svg width="17" height="15" viewBox="0 0 17 15">
              <path d="M1 2h15v12H1z" fill="#222" />
              <path d="M2 1h12v4H2z" fill="#9cc" />
              <path d="M10 2h5v2h-5z" fill="#cfc" />
              <path d="M2 8h4M2 8v4h3v-2M8 8v4M8 8h3v4M13 8v4M13 8h3" stroke="#fff" fill="none" />
            </svg>
            <CaptureName>Gif...</CaptureName>
            <CaptionButton aria-label="minimize">
              <svg width="13" height="13" viewBox="0 0 13 13"><path d="M1 9h8v3H1z" fill="#fff" /></svg>
            </CaptionButton>
            <CaptionButton disabled aria-label="maximize">
              <svg width="13" height="13" viewBox="0 0 13 13"><path d="M1 2h11v10H1zM1 3h11" fill="none" stroke="#9bf" strokeWidth="2" /></svg>
            </CaptionButton>
            <CaptionButton $tone="linear-gradient(135deg, #f96, #c30)" aria-label="close">
              <svg width="13" height="13" viewBox="0 0 13 13"><path d="M2 2l9 9M11 2l-9 9" stroke="#fff" strokeWidth="2.400" /></svg>
            </CaptionButton>
          </CaptureTitle>
          <CaptureMenu>
            <CaptureMenuItem>文件</CaptureMenuItem>
            <CaptureMenuItem disabled>编辑</CaptureMenuItem>
          </CaptureMenu>
          <CaptureBody>
            <Owner>kukuasir</Owner>
            <Row $h={22} $gap={2}>
              <Push disabled>开始</Push>
              <Push disabled>抓取</Push>
              <Push>停止</Push>
            </Row>
            <Row $h={14}><span>0 <Cn>帧</Cn> (0 <Cn>字节</Cn>)</span></Row>
            <Row $h={16} />
            <Legend>捕捉区域</Legend>
            <Row $h={14}><Cn>尺寸</Cn>:<Value>1275x734</Value></Row>
            <Row $h={14}><Cn>左角顶点</Cn>:<Value>4,3</Value></Row>
            <Row $h={22} $above={1} $gap={5}>
              <Check><Tick type="checkbox" /><Cn>显示区域</Cn></Check>
              <Push $wide disabled>选择区域</Push>
            </Row>
            <Row $h={22} $above={3}><Push $wide>刷新屏幕</Push></Row>
            <Row $h={20} />
            <Legend>捕捉选项</Legend>
            <Row $h={16} $above={1}>
              <label htmlFor="fps"><Cn>最大帧频</Cn>:</label>
              <Pick $w={61}>
                <PickSelect id="fps"><option>3 fps</option></PickSelect>
                <PickArrow width="8" height="8" viewBox="0 0 8 8"><path d="M0 0h8L5 8H3z" /></PickArrow>
              </Pick>
            </Row>
            <Row $h={2} />
            {options.map((o) => (
              <Check key={o}><Tick type="checkbox" defaultChecked /><Cn>{o}</Cn></Check>
            ))}
            <Check><Tick type="checkbox" defaultChecked /><span>Explorer 2.0 <Cn>兼容</Cn></span></Check>
            <Row $h={16} $above={1}>
              <label htmlFor="scale"><Cn>录制尺寸</Cn></label>
              <Pick $w={49}>
                <PickSelect id="scale"><option>100%</option></PickSelect>
                <PickArrow width="8" height="8" viewBox="0 0 8 8"><path d="M0 0h8L5 8H3z" /></PickArrow>
              </Pick>
            </Row>
          </CaptureBody>
        </Capture>

        <Strip>
          <StripShape width="296" height="47" viewBox="0 0 296 47" preserveAspectRatio="none">
            <path d="M0 0h296v47H0z" fill="#cff" />
            <path d="M130 3h166v7H136z" fill="#cff" />
            <path d="M136 8h160v13H150z" fill="#9cf" />
            <path d="M140 9h156v4H143z" fill="#ccf" />
            <path d="M2 2h123c16 0 12 20 26 21h145v23H2z" fill="#fff" />
            <path d="M2.500 46V5c0-2 1-2.500 3-2.500h119c15 0 12 20 26 20.500h145" fill="none" stroke="#69c" />
            <path d="M4 46V4M2 46h294" stroke="#9cf" />
            <path d="M5 22.500h133" stroke="#9cf" />
            <path d="M0 .5h296M.5 0v47" stroke="#6cc" />
          </StripShape>
          <StripRow onSubmit={(e) => e.preventDefault()}>
            <StripInput aria-label="搜索内容" />
            <Spaced $w={69} type="submit">
              <svg width="18" height="16" viewBox="0 0 18 16" fill="none">
                <path d="M1 15l5-5" stroke="#06c" strokeWidth="3" />
                <circle cx="11" cy="6" r="5" fill="#eff" stroke="#28d" strokeWidth="2" />
              </svg>
              搜 索
            </Spaced>
            <Pill $w={36} type="button">网址</Pill>
            <Pill $w={19} type="button">词</Pill>
            <Pill $w={16} type="button" aria-label="关闭">
              <svg width="10" height="10" viewBox="0 0 10 10"><path d="M1 1l8 8M9 1L1 9" stroke="#036" strokeWidth="2" /></svg>
            </Pill>
          </StripRow>
          <Round aria-label="展开">
            <svg width="10" height="10" viewBox="0 0 10 10" fill="none" stroke="#058"><path d="M.5.5h6v6h-6zM3.500 3.500h6v6h-6zM3 3l4 4M3 6V3h3" /></svg>
          </Round>
        </Strip>
      </Frame>
    </>
  );
}
